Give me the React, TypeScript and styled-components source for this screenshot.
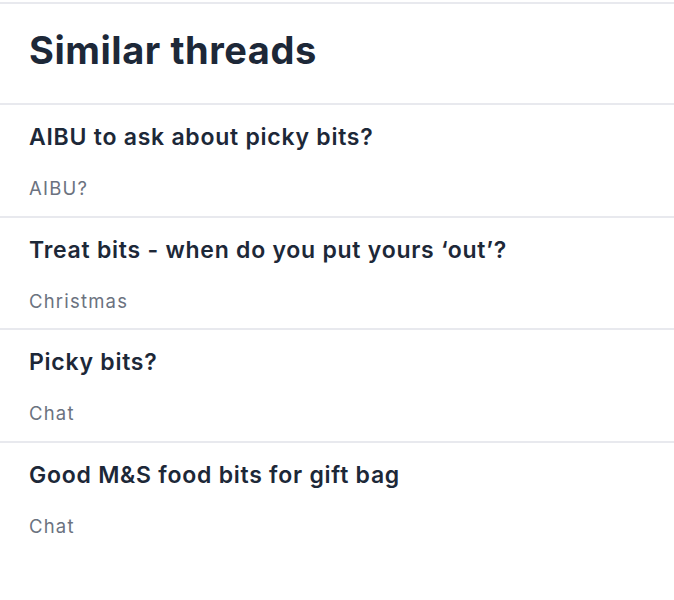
import React from 'react';
import styled, { createGlobalStyle } from 'styled-components';

const GlobalStyle = createGlobalStyle`
  html, body {
    margin: 0;
    padding: 0;
    background: #fff;
  }
  body {
    font-family: Inter, "Noto Sans", "Liberation Sans", sans-serif;
    -webkit-font-smoothing: antialiased;
  }
`;

const StyledSection = styled.section`
  margin-top: 2px;
  border-top: 2px solid #e8e9ee;
  background: #fff;
`;

const StyledHeader = styled.div`
  padding: 18px 29px 25px;
  border-bottom: 2px solid #e8e9ee;
`;

const StyledHeading = styled.h2`
  margin: 0;
  font-size: 38px;
  line-height: 56px;
  font-weight: 700;
  color: #1d2838;
  letter-spacing: 0.55px;
`;

const StyledList = styled.ul`
  list-style: none;
  margin: 0;
  padding: 0;
`;

type RowProps = {
  isLast: boolean
};

const StyledRow = styled.li<RowProps>`
  display: flex;
  flex-direction: column;
  gap: 22px;
  padding: 16px 29px 13.5px;
  border-bottom: ${({ isLast }) => (isLast ? 'none' : '2px solid #e8e9ee')};
`;

const StyledTitle = styled.a`
  font-size: 23px;
  line-height: 32px;
  font-weight: 600;
  color: #1d2838;
  letter-spacing: 0.75px;
  text-decoration: none;
`;

const StyledTopic = styled.span`
  font-size: 18.5px;
  line-height: 27px;
  color: #6b7280;
  letter-spacing: 1.2px;
`;

type Thread = {
  title: string,
  topic: string
};

const threads: Thread[] = [
  { title: 'AIBU to ask about picky bits?', topic: 'AIBU?' },
  { title: 'Treat bits - when do you put yours ‘out’?', topic: 'Christmas' },
  { title: 'Picky bits?', topic: 'Chat' },
  { title: 'Good M&S food bits for gift bag', topic: 'Chat' },
];

const App = () => (
  <>
    <GlobalStyle />
    <StyledSection>
      <StyledHeader>
        <StyledHeading>Similar threads</StyledHeading>
      </StyledHeader>
      <StyledList>
        {threads.map((thread, i) => (
          <StyledRow key={thread.title} isLast={i === threads.length - 1}>
            <StyledTitle href="#">{thread.title}</StyledTitle>
            <StyledTopic>{thread.topic}</StyledTopic>
          </StyledRow>
        ))}
      </StyledList>
    </StyledSection>
  </>
);

export default App;
